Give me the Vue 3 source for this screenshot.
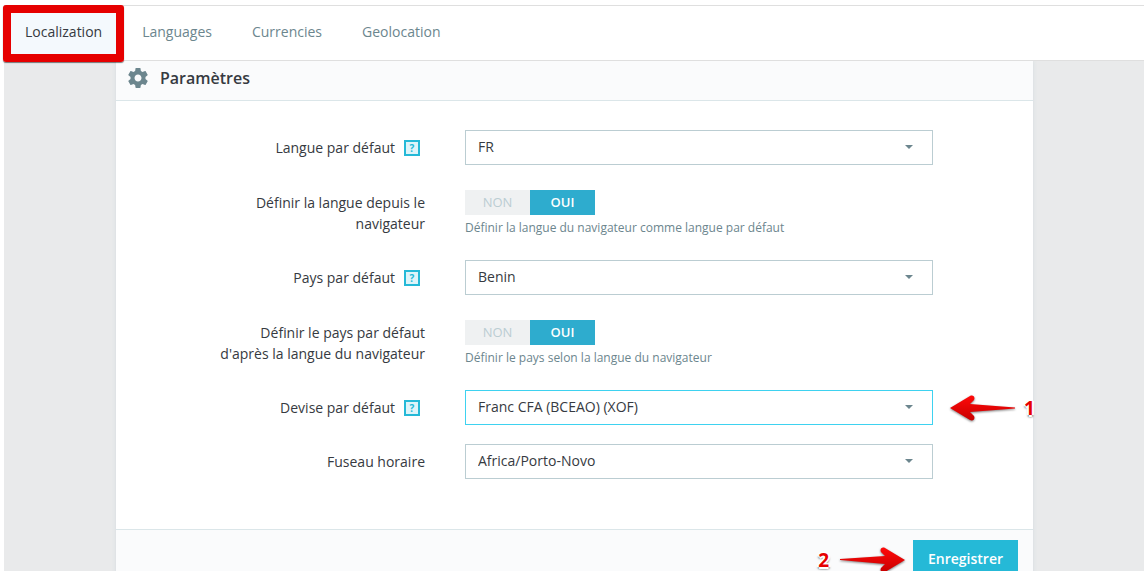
<script setup>
import { ref } from 'vue'

const tabs = ['Localization', 'Languages', 'Currencies', 'Geolocation']
const activeTab = ref('Localization')

const fields = ref([
  { id: 'lang', type: 'select', label: 'Langue par défaut', help: true, value: 'FR' },
  {
    id: 'detect-lang',
    type: 'switch',
    label: 'Définir la langue depuis le navigateur',
    hint: 'Définir la langue du navigateur comme langue par défaut',
    value: 'OUI',
  },
  { id: 'country', type: 'select', label: 'Pays par défaut', help: true, value: 'Benin' },
  {
    id: 'detect-country',
    type: 'switch',
    label: "Définir le pays par défaut d'après la langue du navigateur",
    hint: 'Définir le pays selon la langue du navigateur',
    value: 'OUI',
  },
  { id: 'currency', type: 'select', label: 'Devise par défaut', help: true, value: 'Franc CFA (BCEAO) (XOF)', active: true, step: '1' },
  { id: 'timezone', type: 'select', label: 'Fuseau horaire', value: 'Africa/Porto-Novo' },
])
</script>

<template>
  <div class="page">
    <nav class="tabs">
      <a
        v-for="tab in tabs"
        :key="tab"
        href="#"
        class="tab"
        :class="{ active: tab === activeTab }"
        @click.prevent="activeTab = tab"
      >{{ tab }}</a>
      <span class="highlight"></span>
    </nav>

    <main class="content">
      <form class="card" @submit.prevent>
        <header class="card-header">
          <svg class="gear" viewBox="0 0 24 24" width="24" height="24" aria-hidden="true">
            <path d="M19.43 12.98c.04-.32.07-.64.07-.98s-.03-.66-.07-.98l2.11-1.65c.19-.15.24-.42.12-.64l-2-3.46c-.12-.22-.39-.3-.61-.22l-2.49 1c-.52-.4-1.08-.73-1.69-.98l-.38-2.65C14.46 2.18 14.25 2 14 2h-4c-.25 0-.46.18-.49.42l-.38 2.65c-.61.25-1.17.59-1.69.98l-2.49-1c-.23-.09-.49 0-.61.22l-2 3.46c-.13.22-.07.49.12.64l2.11 1.65c-.04.32-.07.65-.07.98s.03.66.07.98l-2.11 1.65c-.19.15-.24.42-.12.64l2 3.46c.12.22.39.3.61.22l2.49-1c.52.4 1.08.73 1.69.98l.38 2.65c.03.24.24.42.49.42h4c.25 0 .46-.18.49-.42l.38-2.65c.61-.25 1.17-.59 1.69-.98l2.49 1c.23.09.49 0 .61-.22l2-3.46c.12-.22.07-.49-.12-.64l-2.11-1.65zM12 15.5c-1.93 0-3.5-1.57-3.5-3.5s1.57-3.5 3.5-3.5 3.5 1.57 3.5 3.5-1.57 3.5-3.5 3.5z" />
          </svg>
          <h1 class="title">Paramètres</h1>
        </header>

        <div class="card-body">
          <div v-for="f in fields" :key="f.id" class="row" :class="f.type">
            <div class="label-cell">
              <label :id="f.id + '-label'" :for="f.type === 'select' ? f.id : f.id + '-oui'">{{ f.label }}</label>
              <button v-if="f.help" type="button" class="help">?</button>
            </div>

            <div v-if="f.type === 'select'" class="control">
              <select :id="f.id" v-model="f.value" class="select-input" :class="{ active: f.active }">
                <option>{{ f.value }}</option>
              </select>
              <svg class="caret" viewBox="0 0 8 4" width="8" height="4" aria-hidden="true">
                <path d="M0 0h8L4 4z" />
              </svg>
              <div v-if="f.step" class="callout callout-field">
                <svg class="arrow" viewBox="0 0 66 28" width="66" height="28" aria-hidden="true">
                  <defs>
                    <linearGradient id="red-left" x1="0" y1="0" x2="0" y2="1">
                      <stop offset="0" stop-color="#ff0a0a" />
                      <stop offset="1" stop-color="#c80000" />
                    </linearGradient>
                  </defs>
                  <path fill="url(#red-left)" d="M0 14 20 2c3-1.500 5.500 1 4 4l-4 4 45 3.500v1L20 18l4 4c1.500 3-1 5.500-4 4z" />
                </svg>
                <span class="step">{{ f.step }}</span>
              </div>
            </div>

            <div v-else class="control" role="radiogroup" :aria-labelledby="f.id + '-label'">
              <div class="toggle">
                <label v-for="o in ['NON', 'OUI']" :key="o" class="option" :class="{ on: f.value === o }">
                  <input :id="f.id + '-' + o.toLowerCase()" v-model="f.value" type="radio" :name="f.id" :value="o" />
                  {{ o }}
                </label>
              </div>
              <p class="hint">{{ f.hint }}</p>
            </div>
          </div>
        </div>

        <footer class="card-footer">
          <div class="save">
            <div class="callout callout-save">
              <span class="step">2</span>
              <svg class="arrow" viewBox="0 0 66 28" width="66" height="28" aria-hidden="true">
                <defs>
                  <linearGradient id="red-right" x1="0" y1="0" x2="0" y2="1">
                    <stop offset="0" stop-color="#ff0a0a" />
                    <stop offset="1" stop-color="#c80000" />
                  </linearGradient>
                </defs>
                <path fill="url(#red-right)" d="M66 14 46 2c-3-1.500-5.500 1-4 4l4 4-45 3v1L46 18l-4 4c-1.500 3 1 5.500 4 4z" />
              </svg>
            </div>
            <button type="submit" class="save-button">Enregistrer</button>
          </div>
        </footer>
      </form>
    </main>
  </div>
</template>

<style>
body {
  background: #fff;
}
</style>

<style scoped>
* {
  box-sizing: border-box;
}
.page {
  display: flex;
  flex-direction: column;
  height: 100vh;
  overflow: hidden;
  padding: 5px 1px 0 4px;
  font-family: "Open Sans", "Noto Sans", sans-serif;
  font-size: 14px;
  line-height: 21px;
  color: #363a41;
}
.tabs {
  position: relative;
  z-index: 1;
  flex: none;
  display: flex;
  padding-left: 1px;
  border-top: 1px solid #dfdfdf;
  border-bottom: 1px solid #dfdfdf;
  background: #fff;
}
.tab {
  padding: 15px 20px 18px;
  color: #6c868e;
  text-decoration: none;
}
.tab.active {
  background: #f4f9fd;
  color: #363a41;
}
.highlight {
  position: absolute;
  top: -1px;
  left: -1px;
  width: 121px;
  height: 57px;
  border: 8px solid #e60000;
  border-radius: 3px;
  box-shadow: 0 1px 1px rgba(0, 0, 0, 0.5);
  pointer-events: none;
}
.content {
  flex: 1;
  min-height: 0;
  padding: 0 111px 0 112px;
  background: #e9eaeb;
}
.card {
  background: #fff;
  box-shadow: 0 0 4px #d3dbde;
}
.card-header {
  display: flex;
  align-items: center;
  gap: 10px;
  padding: 5px 10px 10px;
  border-bottom: 1px solid #dbe6e9;
  background: #fafbfc;
}
.gear {
  fill: #6c868e;
}
.title {
  margin: 0;
  font-size: 16px;
  line-height: 24px;
  font-weight: 600;
}
.card-body {
  display: flex;
  flex-direction: column;
  gap: 19px;
  padding: 29px 100px 50px;
}
.row {
  display: grid;
  grid-template-columns: 209fr 468fr;
  column-gap: 40px;
}
.row.switch {
  padding-top: 6px;
}
.label-cell {
  display: flex;
  justify-content: flex-end;
  align-items: center;
  gap: 9px;
  text-align: right;
}
.row.select .label-cell {
  min-height: 35px;
}
.row.switch .label-cell {
  align-items: flex-start;
  padding-top: 2px;
}
.help {
  width: 16px;
  height: 16px;
  margin-right: 5px;
  padding: 0;
  border: 2px solid #25b9d7;
  background: #def4f9;
  color: #25b9d7;
  font: bold 10px/12px "Open Sans", sans-serif;
}
.control {
  position: relative;
}
.select-input {
  display: block;
  width: 100%;
  height: 35px;
  padding: 0 36px 2px 12px;
  border: 1px solid #bbcdd2;
  border-radius: 0;
  outline: none;
  appearance: none;
  background: #fff;
  color: #363a41;
  font: 14px/21px "Open Sans", "Noto Sans", sans-serif;
}
.select-input.active {
  border-color: #3ed2f0;
}
.caret {
  position: absolute;
  top: 15px;
  right: 20px;
  fill: #6c868e;
  pointer-events: none;
}
.toggle {
  display: flex;
  width: 130px;
}
.option {
  flex: 1;
  height: 25px;
  background: #eff1f2;
  color: #bbcdd2;
  font-size: 13px;
  line-height: 25px;
  text-align: center;
}
.option.on {
  background: #2eacce;
  color: #fff;
  font-weight: 600;
}
.option input {
  position: absolute;
  opacity: 0;
  pointer-events: none;
}
.hint {
  margin: 4px 0 0;
  padding-bottom: 4px;
  color: #6c868e;
  font-size: 12px;
  line-height: 18px;
}
.card-footer {
  display: flex;
  justify-content: flex-end;
  padding: 10px 15px;
  border-top: 1px solid #dbe6e9;
  background: #fafbfc;
}
.save {
  position: relative;
}
.save-button {
  padding: 8px 15px;
  border: 0;
  background: #25b9d7;
  color: #fff;
  font: 600 14px/21px "Open Sans", "Noto Sans", sans-serif;
}
.callout {
  position: absolute;
  display: flex;
  align-items: center;
  gap: 10px;
}
.callout-field {
  top: 4px;
  left: calc(100% + 17px);
  gap: 8px;
}
.callout-save {
  top: 6px;
  right: calc(100% + 8px);
}
.arrow {
  flex: none;
  filter: drop-shadow(0 1px 1px rgba(0, 0, 0, 0.5));
}
.step {
  color: #e60000;
  font-size: 19px;
  line-height: 28px;
  font-weight: 700;
  text-shadow: -1px -1px 0 #fff, 1px -1px 0 #fff, -2px 0 0 #fff, 2px 0 0 #fff, 0 2px 0 #fff, 1px 2px 2px #777, -1px 2px 2px #777;
}
</style>
